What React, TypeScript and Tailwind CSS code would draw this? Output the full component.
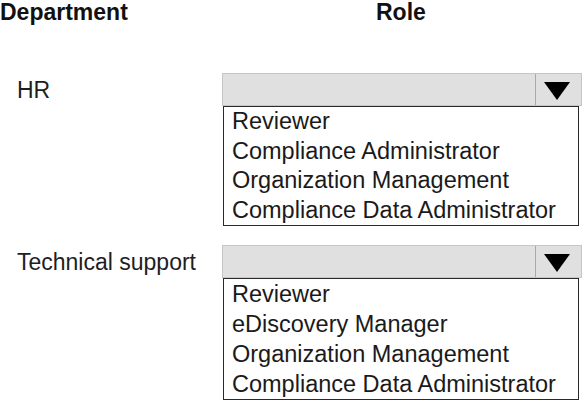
import React from "react";

function Combo() {
  return (
    <div className="flex h-[33px] w-[360px] border border-[#c6c6c6] bg-[#e0e0e0]">
      <div className="flex-1" />
      <div className="flex w-[46px] items-center justify-center border-l border-[#a9a9a9] pr-[3px] pt-[2px]">
        <svg width="26" height="18" viewBox="0 0 26 18">
          <polygon points="0,0 26,0 13,18" fill="#000" />
        </svg>
      </div>
    </div>
  );
}

function List({ items, rowH }: { items: string[]; rowH: string }) {
  return (
    <div className="ml-[223px] w-[356px] border border-[#2a2a2a] bg-white pl-[8px] text-[23.5px] text-[#1a1a1a]">
      {items.map((it) => (
        <div key={it} className={rowH + " whitespace-nowrap"}>
          {it}
        </div>
      ))}
    </div>
  );
}

export default function App() {
  return (
    <div className="h-[402px] w-[582px] overflow-hidden bg-white font-['Liberation_Sans',Arial,sans-serif] text-[#1e1e1e]">
      <div className="flex h-[24px] text-[23px] font-bold leading-[24px] text-[#111]">
        <div className="w-[376px]">Department</div>
        <div>Role</div>
      </div>

      <div className="mt-[49px] flex items-center">
        <div className="w-[222px] pl-[17px] text-[23px] leading-[24px]">HR</div>
        <Combo />
      </div>
      <List
        rowH="h-[29.5px] leading-[29.5px]"
        items={[
          "Reviewer",
          "Compliance Administrator",
          "Organization Management",
          "Compliance Data Administrator",
        ]}
      />

      <div className="mt-[19px] flex items-center">
        <div className="w-[222px] pl-[17px] text-[23px] leading-[24px]">Technical support</div>
        <Combo />
      </div>
      <List
        rowH="h-[30px] leading-[30px]"
        items={[
          "Reviewer",
          "eDiscovery Manager",
          "Organization Management",
          "Compliance Data Administrator",
        ]}
      />
    </div>
  );
}
